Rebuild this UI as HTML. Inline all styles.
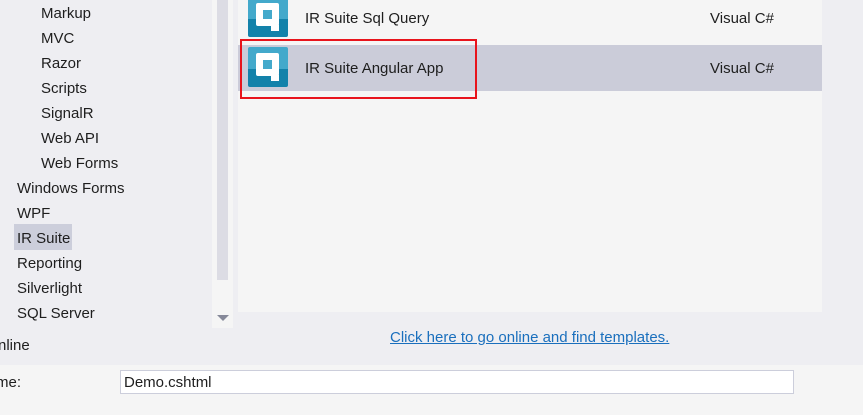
<!DOCTYPE html>
<html><head><style>
body{margin:0;width:863px;height:415px;background:#eeeef2;position:relative;overflow:hidden;font-family:"Liberation Sans",sans-serif;font-size:15px;color:#1e1e1e}
.t{position:absolute;line-height:20px;white-space:nowrap}
.ic{position:absolute;left:248px;width:40px;height:40px;background:linear-gradient(#43a9cb 0,#43a9cb 55%,#1382aa 55%);border-radius:2px}
.ic:before{content:"";position:absolute;left:8px;top:6px;width:9px;height:9px;border:7px solid #fff;border-radius:2px}
.ic:after{content:"";position:absolute;left:23px;top:28px;width:8px;height:6px;background:#fff}
</style></head><body>
<div class="t" style="left:41px;top:4px">Markup</div>
<div class="t" style="left:41px;top:29px">MVC</div>
<div class="t" style="left:41px;top:54px">Razor</div>
<div class="t" style="left:41px;top:79px">Scripts</div>
<div class="t" style="left:41px;top:104px">SignalR</div>
<div class="t" style="left:41px;top:129px">Web API</div>
<div class="t" style="left:41px;top:154px">Web Forms</div>
<div class="t" style="left:17px;top:179px">Windows Forms</div>
<div class="t" style="left:17px;top:204px">WPF</div>
<div style="position:absolute;left:14px;top:224px;width:58px;height:26px;background:#cccedb"></div>
<div class="t" style="left:17px;top:229px">IR Suite</div>
<div class="t" style="left:17px;top:254px">Reporting</div>
<div class="t" style="left:17px;top:279px">Silverlight</div>
<div class="t" style="left:17px;top:304px">SQL Server</div>
<div class="t" style="left:-2px;top:336px">nline</div>
<div style="position:absolute;left:212px;top:0;width:21px;height:328px;background:#f5f5f5"></div>
<div style="position:absolute;left:217px;top:0;width:11px;height:280px;background:#dcdce4"></div>
<div style="position:absolute;left:217px;top:315px;width:0;height:0;border-left:6px solid transparent;border-right:6px solid transparent;border-top:6px solid #868999"></div>
<div style="position:absolute;left:238px;top:0;width:584px;height:312px;background:#f5f5f5"></div>
<div style="position:absolute;left:238px;top:45px;width:584px;height:46px;background:#cbccd9"></div>
<div class="ic" style="top:-3px"></div>
<div class="ic" style="top:47px"></div>
<div class="t" style="left:305px;top:9px">IR Suite Sql Query</div>
<div class="t" style="left:710px;top:9px">Visual C#</div>
<div class="t" style="left:305px;top:59px">IR Suite Angular App</div>
<div class="t" style="left:710px;top:59px">Visual C#</div>
<div style="position:absolute;left:240px;top:39px;width:233px;height:56px;border:2px solid #e8141c"></div>
<div class="t" style="left:390px;top:328px;color:#1a6fbd;text-decoration:underline">Click here to go online and find templates.</div>
<div style="position:absolute;left:0;top:365px;width:863px;height:50px;background:#f5f5f5"></div>
<div class="t" style="left:-4px;top:373px">me:</div>
<div style="position:absolute;left:120px;top:370px;width:672px;height:22px;background:#fff;border:1px solid #cccedb"></div>
<div class="t" style="left:124px;top:373px">Demo.cshtml</div>
</body></html>
